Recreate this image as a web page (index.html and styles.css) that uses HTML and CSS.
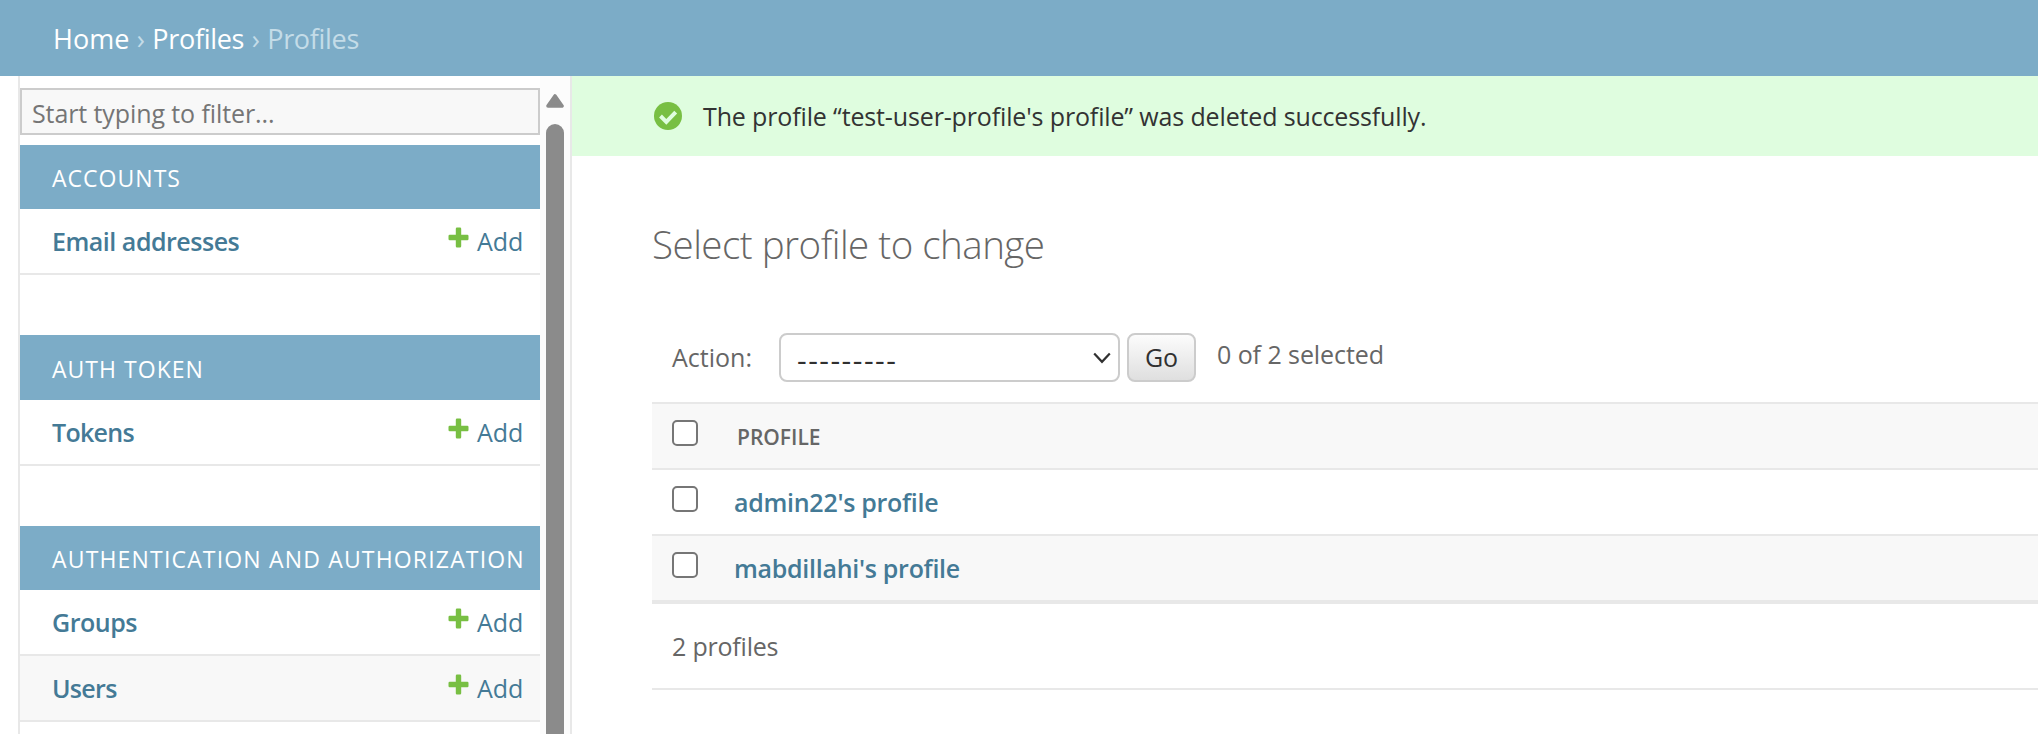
FILE: index.html
```
<!DOCTYPE html>
<html lang="en">
<head>
<meta charset="utf-8">
<title>Select profile to change</title>
<link rel="stylesheet" href="styles.css">
</head>
<body>
<svg class="defs" width="0" height="0" aria-hidden="true">
  <symbol id="plus" viewBox="0 0 21 21"><path d="M9 0.5h3a1.2 1.2 0 0 1 1.2 1.2v6.1h6.1a1.2 1.2 0 0 1 1.2 1.2v3a1.2 1.2 0 0 1-1.2 1.2h-6.1v6.1a1.2 1.2 0 0 1-1.2 1.2h-3a1.2 1.2 0 0 1-1.2-1.2v-6.1h-6.1a1.2 1.2 0 0 1-1.2-1.2v-3a1.2 1.2 0 0 1 1.2-1.2h6.1v-6.1a1.2 1.2 0 0 1 1.2-1.2z" fill="#78bf43"/></symbol>
</svg>
<header class="breadcrumbs"><a>Home</a><i class="sep">›</i><a class="t-crumb">Profiles</a><i class="sep">›</i><span class="t-crumb">Profiles</span></header>
<div class="main">
  <nav class="sidebar">
    <div class="nav-content">
      <input class="filter" type="text" placeholder="Start typing to filter...">
      <section class="module">
        <h2><span>Accounts</span></h2>
        <div class="row"><a class="name">Email addresses</a><svg class="plus"><use href="#plus"/></svg><a class="add">Add</a></div>
      </section>
      <section class="module tall">
        <h2><span>Auth Token</span></h2>
        <div class="row"><a class="name t-tokens">Tokens</a><svg class="plus"><use href="#plus"/></svg><a class="add">Add</a></div>
      </section>
      <section class="module">
        <h2><span class="t-authz">Authentication and Authorization</span></h2>
        <div class="row"><a class="name">Groups</a><svg class="plus"><use href="#plus"/></svg><a class="add">Add</a></div>
        <div class="row alt"><a class="name t-users">Users</a><svg class="plus"><use href="#plus"/></svg><a class="add">Add</a></div>
      </section>
    </div>
    <div class="scrollbar">
      <svg class="arrow" viewBox="0 0 18 14"><path d="M9 2L16 12H2z" fill="#8b8b8b" stroke="#8b8b8b" stroke-width="3.6" stroke-linejoin="round"/></svg>
      <div class="thumb"></div>
    </div>
  </nav>
  <main class="content">
    <div class="message">
      <svg class="tick" viewBox="0 0 28 28"><circle cx="14" cy="14" r="14" fill="#78bf43"/><path d="M6.5 14L12.3 19.8L21.7 10.1" fill="none" stroke="#dffddf" stroke-width="4"/></svg>
      <span class="t-msg">The profile “test-user-profile's profile” was deleted successfully.</span>
    </div>
    <div class="changelist">
      <h1>Select profile to change</h1>
      <div class="actions">
        <label>Action:</label>
        <div class="select"><span class="dashes">---------</span><svg class="chevron" viewBox="0 0 18 12"><path d="M1.2 1.5L9 9.8L16.8 1.5" fill="none" stroke="#303030" stroke-width="2.2"/></svg></div>
        <button class="go">Go</button>
        <span class="counter">0 of 2 selected</span>
      </div>
      <div class="results">
        <div class="line head"><input type="checkbox"><span>Profile</span></div>
        <div class="line"><input type="checkbox"><a>admin22's profile</a></div>
        <div class="line alt last"><input type="checkbox"><a>mabdillahi's profile</a></div>
      </div>
      <p class="paginator">2 profiles</p>
    </div>
  </main>
</div>
</body>
</html>
```
FILE: styles.css
```
* { box-sizing: border-box; }
body { margin: 0; width: 2038px; height: 734px; overflow: hidden; background: #fff; color: #666; font: 25px/64px "Open Sans", "Noto Sans", sans-serif; }
.defs { position: absolute; }
h1, h2, p { margin: 0; font-weight: 400; }
span, a, label { white-space: nowrap; }
.breadcrumbs { height: 76px; padding: 1px 0 0 53px; background: #7cacc7; color: #c4dce8; font-size: 27px; line-height: 76px; display: flex; }
.breadcrumbs a { color: #fff; }
.t-crumb { letter-spacing: -0.3px; }
.sep { font-style: normal; width: 23px; text-align: center; }
.main { display: flex; height: 658px; }
.sidebar { width: 554px; margin-left: 18px; border-left: 2px solid #e8e8e8; border-right: 2px solid #e8e8e8; display: flex; flex: none; }
.nav-content { width: 520px; padding-top: 12px; }
.filter { display: block; width: 520px; height: 47px; margin-bottom: 10px; padding: 2px 10px 0; border: 2px solid #ccc; background: #f8f8f8; font: 25px "Open Sans", "Noto Sans", sans-serif; letter-spacing: -0.1px; }
.filter::placeholder { color: #757575; opacity: 1; }
.module { margin-bottom: 60px; }
.module h2 { height: 64px; padding: 1px 0 0 32px; background: #7cacc7; color: #fff; font-size: 23px; letter-spacing: 1.03px; text-transform: uppercase; }
.module .t-authz { letter-spacing: 1.17px; }
.tall h2 { height: 65px; padding-top: 2px; }
.row { height: 66px; padding: 0 16px 0 32px; border-bottom: 2px solid #e8e8e8; display: flex; color: #447a96; }
.alt { background: #f8f8f8; }
.name { font-weight: 600; flex: 1; letter-spacing: -0.48px; }
.t-tokens, .t-users { letter-spacing: -0.7px; }
.plus { width: 21px; height: 21px; margin: 18px 8px 0 0; }
.add { width: 47px; }
.scrollbar { width: 30px; padding: 18px 6px 0; background: #fcfcfc; display: flex; flex-direction: column; }
.arrow { width: 18px; height: 14px; margin-bottom: 16px; flex: none; }
.thumb { flex: 1; border-radius: 9px 9px 0 0; background: #8b8b8b; }
.content { flex: 1; }
.message { height: 80px; padding-left: 82px; background: #dffddf; color: #333; line-height: 80px; display: flex; }
.t-msg { letter-spacing: -0.14px; }
.tick { width: 28px; height: 28px; margin: 26px 21px 0 0; }
.changelist { padding: 64px 0 0 80px; }
h1 { height: 48px; font-size: 38.5px; line-height: 48px; font-weight: 300; letter-spacing: -0.5px; }
.actions { height: 134px; padding: 65px 0 20px 20px; display: flex; line-height: 49px; }
.actions label { width: 107px; }
.select { width: 341px; height: 49px; padding: 0 7px 0 16px; border: 2px solid #ccc; border-radius: 8px; display: flex; justify-content: space-between; line-height: 49px; color: #303030; }
.dashes { font-size: 30px; letter-spacing: 1.5px; line-height: 50px; }
.chevron { width: 18px; height: 12px; margin-top: 17px; }
.go { width: 69px; height: 49px; margin: 0 21px 0 7px; padding: 0; border: 2px solid #ccc; border-radius: 8px; background: linear-gradient(#fcfcfc, #dfdfdf); color: #303030; font: 25px/45px "Open Sans", "Noto Sans", sans-serif; }
.counter { line-height: 43px; letter-spacing: -0.07px; }
.results { border-top: 2px solid #e8e8e8; }
.line { height: 66px; padding-left: 20px; border-bottom: 2px solid #e8e8e8; display: flex; }
.line input { appearance: none; width: 26px; height: 26px; margin: 16px 36px 0 0; border: 2px solid #767676; border-radius: 5px; background: #fff; }
.line a { color: #447a96; font-weight: 600; letter-spacing: -0.28px; }
.head { background: #f8f8f8; font-size: 21px; font-weight: 600; line-height: 66px; text-transform: uppercase; }
.head input { margin-right: 39px; }
.last { height: 68px; border-bottom-width: 4px; }
.paginator { height: 86px; padding-left: 20px; border-bottom: 2px solid #e8e8e8; line-height: 84px; letter-spacing: -0.2px; }
```
